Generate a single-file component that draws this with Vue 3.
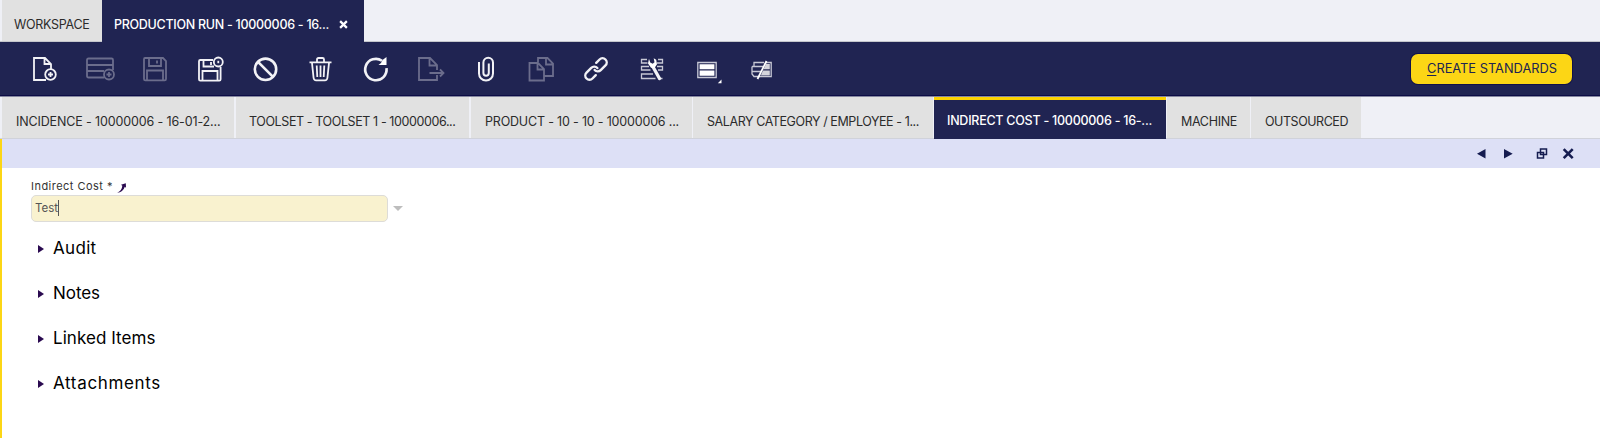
<script setup>
// Tracks a label out (or in) so that it fills the given width in pixels.
const vFit = {
  mounted(el, { value }) {
    const natural = el.getBoundingClientRect().width
    const count = el.textContent.length
    el.style.letterSpacing = `${(value - natural) / count}px`
  },
}

const tabs = [
  { text: 'INCIDENCE - 10000006 - 16-01-2...', fit: 204.5, cls: 'incidence' },
  { text: 'TOOLSET - TOOLSET 1 - 10000006...', fit: 206.5, cls: 'toolset' },
  { text: 'PRODUCT - 10 - 10 - 10000006 ...', fit: 194, cls: 'product' },
  { text: 'SALARY CATEGORY / EMPLOYEE - 1...', fit: 212, cls: 'salary' },
  { text: 'INDIRECT COST - 10000006 - 16-...', fit: 205, cls: 'indirect' },
  { text: 'MACHINE', fit: 56, cls: 'machine' },
  { text: 'OUTSOURCED', fit: 83, cls: 'outsourced' },
]

const sections = [
  { text: 'Audit', fit: 43.5 },
  { text: 'Notes', fit: 47 },
  { text: 'Linked Items', fit: 102.5 },
  { text: 'Attachments', fit: 108 },
]
</script>

<template>
  <div class="app">
    <header class="windows">
      <div class="window"><span v-fit="75.500">WORKSPACE</span></div>
      <div class="window current">
        <span v-fit="215">PRODUCTION RUN - 10000006 - 16...</span>
        <svg class="close" viewBox="0 0 8 8"><path d="M1 1l6 6M7 1l-6 6" /></svg>
      </div>
    </header>

    <div class="toolbar">
      <div class="tools">
        <svg viewBox="0 0 32 32">
          <path d="M17 27H5V5h11l6 6v5M15.500 5v6H22" />
          <circle cx="21.500" cy="21.500" r="5.300" /><path d="M21.500 19v5M19 21.500h5" />
        </svg>
        <svg class="off" viewBox="0 0 32 32">
          <path d="M20 24.500H4.500Q3 24.500 3 23V7q0-1.500 1.500-1.500h23Q29 5.500 29 7v10M3 12h26M3 18h17" />
          <circle cx="25" cy="21.500" r="5" /><path d="M25 19v5M22.500 21.500h5" />
        </svg>
        <svg class="off" viewBox="0 0 32 32">
          <path d="M6 5h18l3 3v18q0 1.300-1.300 1.300H6.300Q5 27.300 5 26V6.300Q5 5 6 5zM10 5v8h12V5M18 7.500v3M8 27v-9.500h16V27" />
        </svg>
        <svg viewBox="0 0 32 32">
          <path d="M19 7H6.300Q5 7 5 8.300v18Q5 27.700 6.300 27.700h19q1.300 0 1.300-1.400V14M9.500 7v6.500H20M17 9v3M8.500 27.500v-9.500h15v9.500" />
          <circle cx="24.300" cy="9" r="4.500" /><path d="M24.300 7.800v2.400" />
        </svg>
        <svg viewBox="0 0 32 32">
          <circle class="heavy" cx="15.500" cy="16.300" r="10.700" /><path class="heavy" d="M8 8.800l15 15" />
        </svg>
        <svg viewBox="0 0 32 32">
          <path d="M4.500 9.300h22M12 9V6.500Q12 5 13.500 5h4Q19 5 19 6.500V9M7 10l1.600 15q.3 2.300 2.500 2.300h8.800q2.200 0 2.500-2.300L24 10M11.700 12.500l.6 11.500M15.500 12.500V24M19.300 12.500L18.700 24" />
        </svg>
        <svg viewBox="0 0 32 32">
          <path class="heavy" d="M26.500 15.200a10.700 10.700 0 1 1-4.500-7.400" />
          <path class="solid" d="M26.500 4v8h-8l2.500-2 1.500-3z" />
        </svg>
        <svg class="off" viewBox="0 0 32 32">
          <path d="M22 22v5H4V5h11l7 7v5M14.500 5v7.500H22M14.500 20H28M25 16.500l3.500 3.500-3.500 3.500" />
        </svg>
        <svg viewBox="0 0 32 32">
          <path class="clip" d="M9 9v11.500a7 7 0 0 0 14 0V9.500a4.800 4.800 0 0 0-9.600 0V20a2.700 2.700 0 0 0 5.400 0V10.500" />
        </svg>
        <svg class="off" viewBox="0 0 32 32">
          <path d="M13 9V5h9.500l5.500 5.500V23H19M21 5v6.500h7M4.500 10H13l6 6v11.500H4.500zM12.500 10v6.500H19" />
        </svg>
        <svg viewBox="0 0 32 32">
          <g class="chain">
            <path d="M11.500 20.200h-4.700a4.200 4.200 0 0 1 0-8.400h6.700a4.200 4.200 0 0 1 4.100 4.500M20.500 11.800h4.700a4.200 4.200 0 0 1 0 8.400h-6.700a4.200 4.200 0 0 1-4.100-4.500" />
          </g>
        </svg>
        <svg viewBox="0 0 32 32">
          <path class="thin" d="M11 6.500H5.500v3.500h6M22 6.500h4.500v3.500H21M13 13.500H5.500v3.500h9M21 13.500h5.500v3.500H22M17 21H5.500v4.500h14M22 25.500h4.500" />
          <path class="wrench" d="M16.500 13L23.500 25.500" />
          <path class="solid" d="M13 5.800l-1 4.700 3 4.200 3.500.2 2.500-3.700-.8-4.400-2.500-1.500.8 4-1.800 1.500-2.500-1.300z" />
        </svg>
        <svg viewBox="0 0 32 32">
          <path class="thin" d="M6.800 9.500h18.400v15H6.800z" />
          <path class="solid" d="M8.600 11.300h14.800v4.900H8.600zM8.600 17.400h14.800v5.300H8.600zM30.500 26.500v3.700h-3.700z" />
        </svg>
        <svg viewBox="0 0 32 32">
          <path class="thin" d="M18 9.500H8v4M6 13.500h11M6 18.500h9M7.500 23.500h4.500M6 13.500v7.500l2 2.500" />
          <path class="shade" d="M20 11h3.800v5.300h-6.300zM17 17.500h6.800v5h-9z" />
          <path class="thin" d="M20 9.500h5.200v14.200H13" />
          <path class="slash" d="M20.500 8L11.500 26" />
        </svg>
      </div>
      <button class="create"><span v-fit="130"><u>C</u>REATE STANDARDS</span></button>
    </div>

    <nav class="tabs">
      <div v-for="tab in tabs" :key="tab.cls" class="tab" :class="tab.cls">
        <span v-fit="tab.fit">{{ tab.text }}</span>
      </div>
    </nav>

    <main class="panel">
      <div class="bar">
        <svg viewBox="0 0 100 20">
          <path class="ink" d="M10.500 5v9.500L2 9.800zM29 5v9.500l8.700-4.700z" />
          <path class="line" d="M65.500 5h6v5.500h-6zM62.500 8.500h6v5.500h-6z" />
          <path class="cross" d="M88.700 5.200l9 9M97.700 5.200L88.700 14.200" />
        </svg>
      </div>
      <div class="form">
        <div class="label">
          <span v-fit="82">Indirect Cost *</span>
          <svg viewBox="0 0 10 10"><path d="M4 1.800L8.800.3 9 4.800 7.800 3.800Q6 9.500.2 9.800 5 7.500 5.300 2.700z" /></svg>
        </div>
        <div class="field">
          <div class="input"><span v-fit="23">Test</span><i class="caret"></i></div>
          <i class="drop"></i>
        </div>
        <div class="sections">
          <div v-for="s in sections" :key="s.text" class="section">
            <i class="marker"></i><span v-fit="s.fit">{{ s.text }}</span>
          </div>
        </div>
      </div>
    </main>
  </div>
</template>

<style>
body { margin: 0; overflow: hidden; }
</style>

<style scoped>
.app { width: 1600px; height: 438px; display: flex; flex-direction: column; background: #fff; font-family: Inter, "Open Sans", sans-serif; white-space: nowrap; }
.app * { box-sizing: border-box; }
span { display: inline-block; }
svg { fill: none; flex: none; }

.windows { height: 42px; flex: none; display: flex; padding-left: 2px; background: #eff0f6; border-bottom: 1px solid #c4c6cc; }
.window { width: 100px; padding: 7px 0 0 12px; display: flex; align-items: center; height: 41px; background: #e1e1e1; color: #2b2b2b; font-size: 12.5px; }
.window.current { width: 262px; height: 42px; padding-top: 6px; color: #fff; background: #202452; font-weight: 500; }
.close { width: 9px; height: 9px; margin-left: 10px; stroke: #fff; stroke-width: 2; }

.toolbar { height: 55px; flex: none; display: flex; justify-content: space-between; align-items: flex-start; padding: 11px 28px 0 17.400px; background: #202452; border-bottom: 1px solid #8587a0; box-shadow: inset 0 -1px #0c0c45; }
.tools { display: grid; grid-template-columns: repeat(14, 55.150px); justify-items: center; }
.tools svg { width: 32px; height: 32px; stroke: #f2f2f6; stroke-width: 1.800; overflow: visible; }
.tools svg.off { stroke: #6b6d8c; stroke-width: 1.800; }
.tools .heavy { stroke-width: 2.600; }
.tools .clip { stroke-width: 2; }
.tools .thin { stroke-width: 1.300; stroke: #c7c8d5; }
.tools .solid { fill: #fff; stroke: none; }
.tools .shade { fill: #d5d5dc; stroke: none; }
.tools .wrench { stroke-width: 3.300; stroke-linecap: round; }
.tools .slash { stroke: #fff; stroke-width: 1.800; }
.tools .chain { transform: rotate(-45deg); transform-origin: 16px 16px; stroke-width: 2.400; stroke-linecap: round; }
.create { width: 161px; height: 30px; margin-top: 1px; padding: 0 0 1px 16px; text-align: left; border: 0; border-radius: 7px; background: #fcd615; color: #202452; font: 12.800px Inter, sans-serif; box-shadow: 0 0 0 1px #11124a; }
.create u { text-underline-offset: 2px; text-decoration-thickness: 1px; }

.tabs { height: 42px; flex: none; display: flex; gap: 1px; padding-left: 2px; background: #eff0f6; border-bottom: 1px solid #d0d2da; }
.tab { display: flex; align-items: center; padding: 8px 0 0 14px; background: #e1e1e1; color: #2b2b2b; font-size: 12.500px; flex: none; height: 41px; }
.incidence { width: 232px; margin-right: 1px; }
.toolset { width: 233px; margin-right: 1px; padding-left: 13px; }
.product { width: 221px; }
.salary { width: 240px; }
.indirect { width: 232px; height: 42px; padding: 1px 0 0 13px; border-top: 3px solid #fcd200; background: #202452; color: #fff; font-weight: 500; }
.machine { width: 83px; }
.outsourced { width: 110px; }

.panel { flex: 1; border-left: 2px solid #fcd615; }
.bar { height: 29px; display: flex; justify-content: flex-end; align-items: flex-start; padding: 5px 25px 0 0; background: #dde0f6; }
.bar svg { width: 100px; height: 20px; }
.ink { fill: #151c50; }
.line { stroke: #151c50; stroke-width: 1.500; }
.cross { stroke: #151c50; stroke-width: 2.600; }

.form { padding: 11px 0 0 29px; }
.label { height: 16px; padding-bottom: 2px; display: flex; align-items: center; font-size: 11px; color: #333; }
.label svg { width: 10px; height: 10px; margin: 4px 0 0 4px; fill: #2a0a50; }
.field { display: flex; align-items: center; }
.input { width: 357px; height: 27px; display: flex; align-items: center; padding: 0 0 1px 4px; border: 1px solid #dddcd8; border-radius: 5px; background: #f9f2cf; font-size: 11.500px; color: #555; }
.input span { margin-left: -1px; }
.caret { width: 1px; height: 16px; background: #555; }
.drop { margin-left: 5px; border: 5px solid transparent; border-top-color: #bdbdbd; border-bottom: 0; }
.sections { display: grid; grid-auto-rows: 45px; padding: 3px 0 0 7px; }
.section { display: flex; align-items: center; font-size: 17px; color: #000; }
.marker { margin: 2px 9px 0 0; border: 4.500px solid transparent; border-left: 6px solid #2a0a50; border-right: 0; }
</style>
